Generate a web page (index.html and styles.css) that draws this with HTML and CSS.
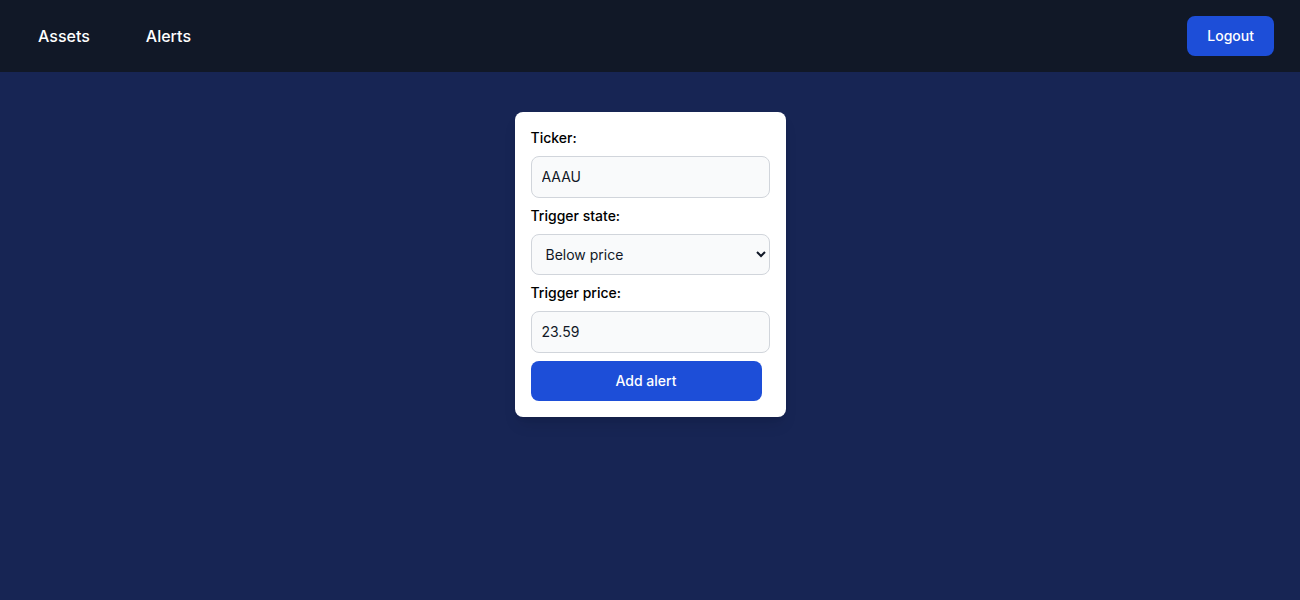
FILE: index.html
```html
<!DOCTYPE html>
<html lang="en">
<head>
<meta charset="utf-8">
<meta name="viewport" content="width=device-width, initial-scale=1">
<title>Alerts</title>
<link rel="stylesheet" href="styles.css">
</head>
<body>
<header class="navbar">
  <nav class="nav-links">
    <a class="nav-link" href="#assets">Assets</a>
    <a class="nav-link" href="#alerts">Alerts</a>
  </nav>
  <button class="button" type="button">Logout</button>
</header>
<main class="content">
  <form class="card">
    <label class="label" for="ticker">Ticker:</label>
    <input class="field" id="ticker" type="text" value="AAAU">
    <label class="label" for="state">Trigger state:</label>
    <select class="field" id="state">
      <option>Above price</option>
      <option selected>Below price</option>
    </select>
    <label class="label" for="price">Trigger price:</label>
    <input class="field" id="price" type="text" inputmode="decimal" value="23.59">
    <button class="button submit" type="button">Add alert</button>
  </form>
</main>
</body>
</html>
```

FILE: styles.css
```css
*, *::before, *::after { box-sizing: border-box; }

body {
  margin: 0;
  min-height: 100vh;
  background: #172554;
  color: #000;
  font-family: Inter, "Liberation Sans", sans-serif;
  font-size: 16px;
  line-height: 24px;
}

.navbar {
  display: flex;
  align-items: center;
  justify-content: space-between;
  padding: 16px 26px 16px 38px;
  background: #111827;
}

.nav-links { display: flex; gap: 56px; }

.nav-link {
  color: #fff;
  font-weight: 500;
  text-decoration: none;
}

.button {
  padding: 10px 20px;
  border: 0;
  border-radius: 8px;
  background: #1d4ed8;
  color: #fff;
  font: 500 14px/20px Inter, "Liberation Sans", sans-serif;
  cursor: pointer;
}

.content {
  display: flex;
  justify-content: center;
  padding: 40px 16px;
}

.card {
  display: flex;
  flex-direction: column;
  padding: 16px;
  border-radius: 8px;
  background: #fff;
  box-shadow: 0 10px 15px -3px rgba(0, 0, 0, 0.1), 0 4px 6px -4px rgba(0, 0, 0, 0.1);
}

.label {
  margin-bottom: 8px;
  font-size: 14px;
  font-weight: 500;
  line-height: 20px;
}

.field {
  width: 239px;
  margin: 0 0 8px;
  padding: 10px;
  border: 1px solid #d1d5db;
  border-radius: 8px;
  background: #f9fafb;
  color: #111827;
  font: 400 14px/20px Inter, "Liberation Sans", sans-serif;
}

.submit { margin-right: 8px; }
```
